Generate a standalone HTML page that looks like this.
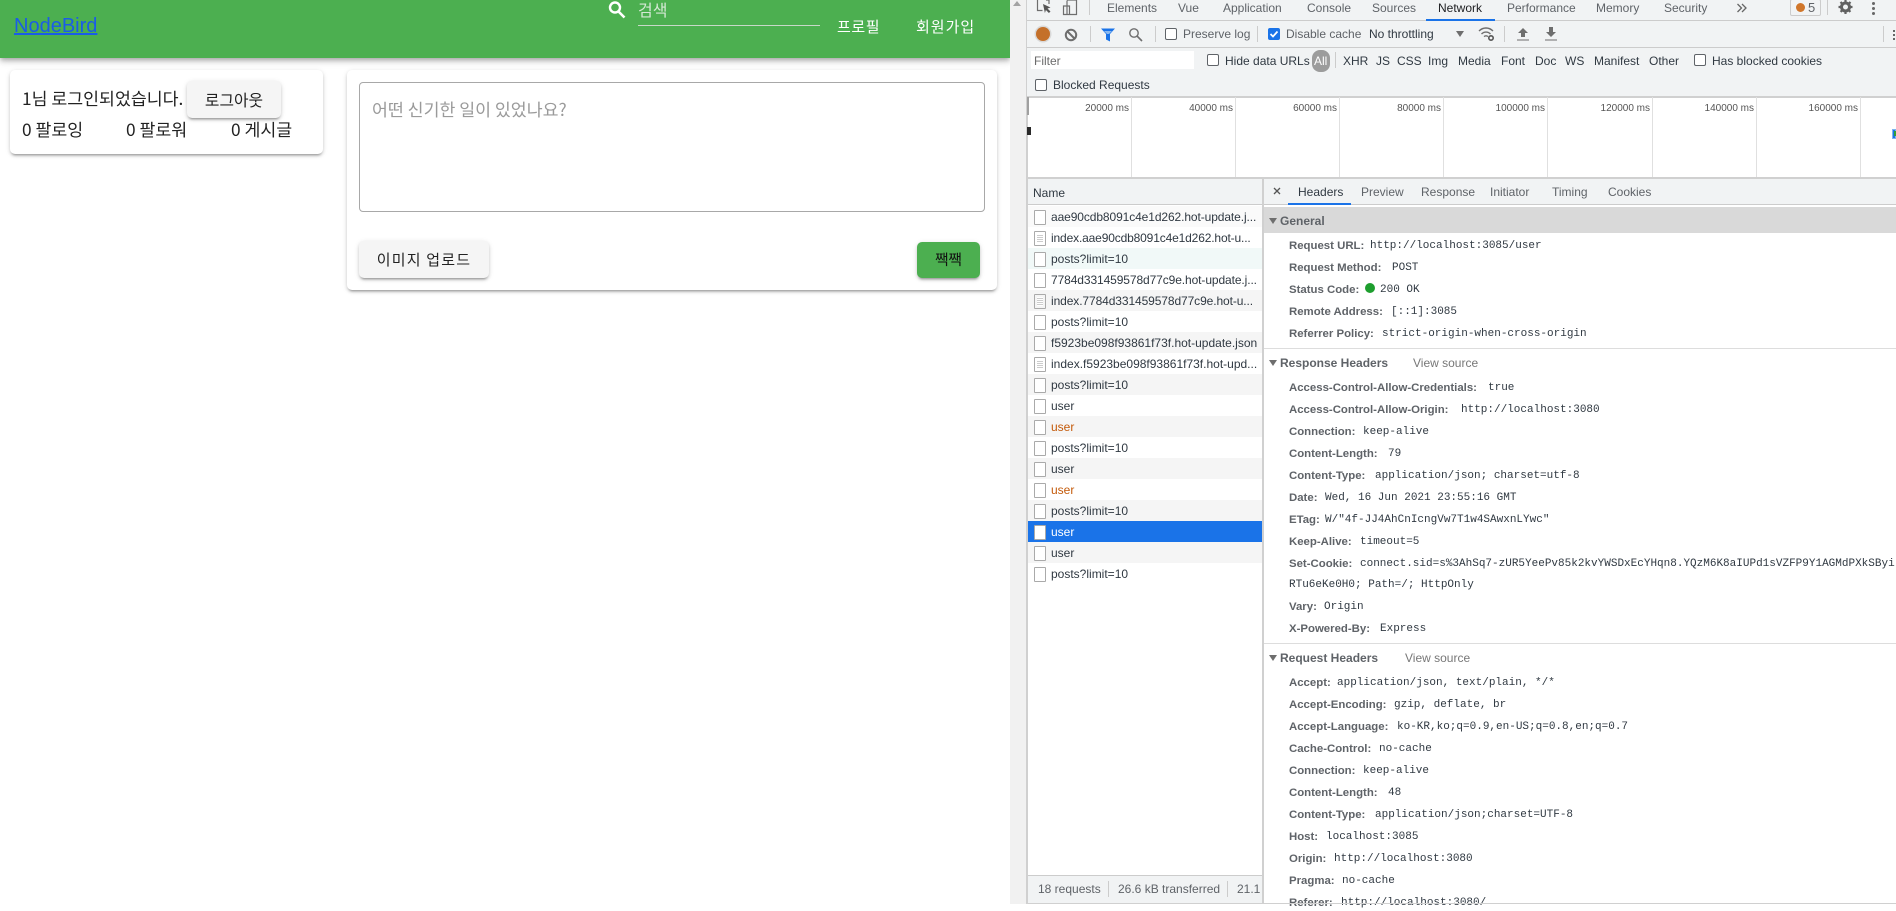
<!DOCTYPE html>
<html><head><meta charset="utf-8"><style>
html,body{margin:0;padding:0;width:1896px;height:904px;overflow:hidden;background:#fff;font-family:"Liberation Sans","Noto Sans CJK KR",sans-serif}
.a,.a *{box-sizing:border-box}
.a{position:absolute;white-space:nowrap}
.k{font-family:"Noto Sans CJK KR","Liberation Sans",sans-serif}
.card{background:#fff;border-radius:5px;box-shadow:0 3px 2px -2px rgba(0,0,0,.28),0 2px 3px rgba(0,0,0,.14),0 1px 6px rgba(0,0,0,.1)}
.btn{background:#f5f5f5;border-radius:5px;box-shadow:0 3px 2px -2px rgba(0,0,0,.3),0 2px 3px rgba(0,0,0,.14),0 1px 6px rgba(0,0,0,.1);text-align:center}
.t{font-size:12px;color:#5f6368;line-height:16px}
.d{font-size:12px;color:#303942;line-height:16px}
.cb{width:12px;height:12px;border:1px solid #5f6368;border-radius:2px;background:#fff}
.sep{width:1px;background:#ccc}
.vl{width:1px;background:#e0e0e0;top:97px;height:80px}
.ms{font-size:10px;color:#555;top:102px;line-height:14px;text-align:right;width:80px}
.row{left:1028px;width:234px;height:21px;font-size:12px;line-height:23px;color:#303942;padding-left:23px;overflow:hidden}
.row i{position:absolute;left:6px;top:4px;width:12px;height:15px;border:1px solid #aaa;background:#fff;border-radius:1px}
.row i.f{background:repeating-linear-gradient(#fff 0 1px,#ccc 1px 2px);background-clip:content-box;padding:2px 2px}
.s{background:#f5f5f5}
.or{color:#c45a0a}
.h{font-size:12px;line-height:16px;color:#5f6368;font-weight:bold;left:1280px}
.r{left:1289px;height:16px;font-size:11.4px;font-weight:bold;color:#5f6368;line-height:16px;margin-top:1px}
.v{font:11px/16px "Liberation Mono",monospace;color:#303942;margin-top:1px}
.tri{width:0;height:0;border-left:4px solid transparent;border-right:4px solid transparent;border-top:6px solid #6e6e6e;left:1269px}
.tight{letter-spacing:-.1px}
</style></head><body>

<!-- App -->
<div class="a" style="left:0;top:0;width:1010px;height:58px;background:#4caf50;box-shadow:0 2px 4px -1px rgba(0,0,0,.2),0 4px 5px rgba(0,0,0,.14),0 1px 10px rgba(0,0,0,.12)"></div>
<div class="a" style="left:14px;top:14px;font-size:20px;line-height:24px;color:#1a5ce8;text-decoration:underline">NodeBird</div>
<svg class="a" style="left:606px;top:0" width="22" height="20" viewBox="0 0 22 20"><circle cx="9" cy="7.5" r="5" fill="none" stroke="#fff" stroke-width="2.4"/><path d="M12.5 11.5l6 6" stroke="#fff" stroke-width="2.6"/></svg>
<div class="a k" style="left:638px;top:-2px;font-size:16px;line-height:22px;color:#d4e8d4">검색</div>
<div class="a" style="left:638px;top:25px;width:182px;height:1px;background:#c8d8c8"></div>
<div class="a k" style="left:837px;top:16px;font-size:15px;line-height:22px;letter-spacing:.6px;color:#fff">프로필</div>
<div class="a k" style="left:916px;top:16px;font-size:15px;line-height:22px;letter-spacing:1px;color:#fff">회원가입</div>

<div class="a card" style="left:10px;top:70px;width:313px;height:84px"></div>
<div class="a k" style="left:22px;top:86px;font-size:17.3px;line-height:24px;color:#222">1님 로그인되었습니다.</div>
<div class="a btn k" style="left:187px;top:81px;width:94px;height:37px;font-size:15.8px;line-height:37px;color:#222">로그아웃</div>
<div class="a k" style="left:22px;top:117px;font-size:17.3px;line-height:24px;color:#222">0 팔로잉</div>
<div class="a k" style="left:126px;top:117px;font-size:17.3px;line-height:24px;color:#222">0 팔로워</div>
<div class="a k" style="left:231px;top:117px;font-size:17.3px;line-height:24px;color:#222">0 게시글</div>

<div class="a card" style="left:347px;top:70px;width:650px;height:220px"></div>
<div class="a" style="left:359px;top:82px;width:626px;height:130px;border:1px solid #a8a8a8;border-radius:4px;background:#fff"></div>
<div class="a k" style="left:372px;top:97px;font-size:17.3px;line-height:24px;color:#9a9a9a">어떤 신기한 일이 있었나요?</div>
<div class="a btn k" style="left:359px;top:241px;width:130px;height:37px;font-size:15px;line-height:37px;letter-spacing:1.2px;color:#222">이미지 업로드</div>
<div class="a btn k" style="left:917px;top:242px;width:63px;height:36px;background:#4caf50;font-size:14.5px;line-height:36px;color:#111">짹짹</div>

<!-- scrollbar strip -->
<div class="a" style="left:1010px;top:0;width:16px;height:904px;background:#f1f1f1"></div>
<div class="a" style="left:1013px;top:1px;width:0;height:0;border-left:4px solid transparent;border-right:4px solid transparent;border-bottom:5px solid #a3a3a3"></div>
<div class="a" style="left:1026px;top:0;width:2px;height:904px;background:#d0d0d0"></div>

<!-- DevTools bars -->
<div class="a" style="left:1027px;top:0;width:869px;height:97px;background:#f1f3f4"></div>
<div class="a" style="left:1027px;top:20px;width:869px;height:1px;background:#ccc"></div>
<div class="a" style="left:1027px;top:47px;width:869px;height:1px;background:#ccc"></div>
<div class="a" style="left:1027px;top:96px;width:869px;height:2px;background:#d0d0d0"></div>

<svg class="a" style="left:1036px;top:0" width="20" height="16" viewBox="0 0 20 16"><path d="M1.5 0v10.5h5M10 0h3v4" fill="none" stroke="#6e6e6e" stroke-width="1.2"/><path d="M7 4l7.5 3.5-3 1 3 3-1.6 1.5-3-3-1 3z" fill="#555"/></svg>
<svg class="a" style="left:1062px;top:0" width="16" height="16" viewBox="0 0 16 16"><path d="M5 .5V14.5M5 6H1.5v8.5h6V6zM5 0h9.5v14.5H8" fill="none" stroke="#6e6e6e" stroke-width="1.2"/></svg>
<div class="a sep" style="left:1089px;top:0;height:15px"></div>

<div class="a t" style="left:1107px;top:0">Elements</div>
<div class="a t" style="left:1178px;top:0">Vue</div>
<div class="a t" style="left:1223px;top:0">Application</div>
<div class="a t" style="left:1307px;top:0">Console</div>
<div class="a t" style="left:1372px;top:0">Sources</div>
<div class="a t" style="left:1438px;top:0;color:#202124">Network</div>
<div class="a" style="left:1426px;top:19px;width:69px;height:2px;background:#1a73e8"></div>
<div class="a t" style="left:1507px;top:0">Performance</div>
<div class="a t" style="left:1596px;top:0">Memory</div>
<div class="a t" style="left:1664px;top:0">Security</div>
<svg class="a" style="left:1736px;top:2px" width="12" height="12" viewBox="0 0 12 12"><path d="M1.5 2l4 4-4 4M6 2l4 4-4 4" fill="none" stroke="#666" stroke-width="1.3"/></svg>
<div class="a" style="left:1790px;top:-1px;width:31px;height:17px;border:1px solid #ccc;border-radius:2px"></div>
<div class="a" style="left:1796px;top:3px;width:9px;height:9px;border-radius:50%;background:#d0762a"></div>
<div class="a t" style="left:1808px;top:0;font-size:13px">5</div>
<div class="a sep" style="left:1827px;top:0;height:15px"></div>
<svg class="a" style="left:1838px;top:0" width="15" height="15" viewBox="0 0 15 15"><circle cx="7.5" cy="7" r="4" fill="none" stroke="#616161" stroke-width="3"/><path d="M7.5 0v14M.5 7h14M2.5 2l10 10M12.5 2l-10 10" stroke="#616161" stroke-width="2.2" stroke-dasharray="2.4 9.2"/></svg>
<div class="a" style="left:1872px;top:2px;width:3px;height:3px;border-radius:50%;background:#666;box-shadow:0 5px 0 #666,0 10px 0 #666"></div>

<!-- toolbar -->
<div class="a" style="left:1036px;top:27px;width:14px;height:14px;border-radius:50%;background:#c4702a;box-shadow:0 0 0 1.5px #d9d9d9"></div>
<svg class="a" style="left:1064px;top:28px" width="14" height="14" viewBox="0 0 14 14"><circle cx="7" cy="7" r="5.2" fill="none" stroke="#6e6e6e" stroke-width="2"/><path d="M3.5 3.5l7 7" stroke="#6e6e6e" stroke-width="2"/></svg>
<div class="a sep" style="left:1090px;top:26px;height:16px"></div>
<svg class="a" style="left:1100px;top:28px" width="16" height="14" viewBox="0 0 16 14"><path d="M1 .5h14L10 6v7.5L6 11.5V6z" fill="#1a73e8"/><path d="M4 3h8L9 6H7z" fill="#8ab8ef"/></svg>
<svg class="a" style="left:1128px;top:27px" width="15" height="15" viewBox="0 0 15 15"><circle cx="6" cy="6" r="4.2" fill="none" stroke="#6e6e6e" stroke-width="1.4"/><path d="M9 9l5 5" stroke="#6e6e6e" stroke-width="1.6"/></svg>
<div class="a sep" style="left:1155px;top:26px;height:16px"></div>
<div class="a cb" style="left:1165px;top:28px"></div>
<div class="a t" style="left:1183px;top:26px">Preserve log</div>
<div class="a sep" style="left:1257px;top:26px;height:16px"></div>
<svg class="a" style="left:1268px;top:28px" width="12" height="12" viewBox="0 0 12 12"><rect width="12" height="12" rx="2" fill="#1a73e8"/><path d="M2.5 6l2.5 2.5 4.5-5" fill="none" stroke="#fff" stroke-width="1.7"/></svg>
<div class="a t" style="left:1286px;top:26px">Disable cache</div>
<div class="a t" style="left:1369px;top:26px;color:#303942">No throttling</div>
<div class="a" style="left:1456px;top:31px;width:0;height:0;border-left:4px solid transparent;border-right:4px solid transparent;border-top:6px solid #6e6e6e"></div>
<svg class="a" style="left:1478px;top:26px" width="18" height="16" viewBox="0 0 18 16"><path d="M1 5c4-4 10-4 14 0M3.5 8c2.6-2.6 6.4-2.6 9 0M6 10.6c1.3-1 2.7-1 4 0" fill="none" stroke="#6e6e6e" stroke-width="1.4"/><circle cx="13" cy="12" r="2.2" fill="none" stroke="#555" stroke-width="1.6"/></svg>
<div class="a sep" style="left:1504px;top:26px;height:16px"></div>
<svg class="a" style="left:1517px;top:27px" width="12" height="14" viewBox="0 0 12 14"><path d="M6 1l5 5H8v4H4V6H1zM0 12.5h12v1H0z" fill="#6e6e6e"/></svg>
<svg class="a" style="left:1545px;top:27px" width="12" height="14" viewBox="0 0 12 14"><path d="M4 0h4v5h3l-5 5-5-5h3zM0 12.5h12v1H0z" fill="#6e6e6e"/></svg>
<div class="a sep" style="left:1883px;top:26px;height:16px"></div>
<div class="a" style="left:1893px;top:30px;width:2px;height:2px;background:#666;box-shadow:0 4px 0 #666,0 8px 0 #666"></div>

<!-- filter row -->
<div class="a" style="left:1031px;top:51px;width:163px;height:18px;background:#fff"></div>
<div class="a" style="left:1034px;top:53px;font-size:12px;line-height:16px;color:#6b6b6b">Filter</div>
<div class="a cb" style="left:1207px;top:54px"></div>
<div class="a d" style="left:1225px;top:53px">Hide data URLs</div>
<div class="a" style="left:1312px;top:50px;width:18px;height:22px;border-radius:8px;background:#9c9c9c"></div>
<div class="a" style="left:1314px;top:53px;font-size:12px;line-height:16px;color:#fff">All</div>
<div class="a sep" style="left:1335px;top:52px;height:16px"></div>
<div class="a d" style="left:1343px;top:53px">XHR</div>
<div class="a d" style="left:1376px;top:53px">JS</div>
<div class="a d" style="left:1397px;top:53px">CSS</div>
<div class="a d" style="left:1428px;top:53px">Img</div>
<div class="a d" style="left:1458px;top:53px">Media</div>
<div class="a d" style="left:1501px;top:53px">Font</div>
<div class="a d" style="left:1535px;top:53px">Doc</div>
<div class="a d" style="left:1565px;top:53px">WS</div>
<div class="a d" style="left:1594px;top:53px">Manifest</div>
<div class="a d" style="left:1649px;top:53px">Other</div>
<div class="a cb" style="left:1694px;top:54px"></div>
<div class="a d" style="left:1712px;top:53px">Has blocked cookies</div>
<div class="a cb" style="left:1035px;top:79px"></div>
<div class="a d" style="left:1053px;top:77px">Blocked Requests</div>

<!-- overview -->
<div class="a" style="left:1028px;top:98px;width:868px;height:79px;background:#fff"></div>
<div class="a vl" style="left:1131px"></div><div class="a ms" style="left:1049px">20000 ms</div>
<div class="a vl" style="left:1235px"></div><div class="a ms" style="left:1153px">40000 ms</div>
<div class="a vl" style="left:1339px"></div><div class="a ms" style="left:1257px">60000 ms</div>
<div class="a vl" style="left:1443px"></div><div class="a ms" style="left:1361px">80000 ms</div>
<div class="a vl" style="left:1547px"></div><div class="a ms" style="left:1465px">100000 ms</div>
<div class="a vl" style="left:1652px"></div><div class="a ms" style="left:1570px">120000 ms</div>
<div class="a vl" style="left:1756px"></div><div class="a ms" style="left:1674px">140000 ms</div>
<div class="a vl" style="left:1860px"></div><div class="a ms" style="left:1778px">160000 ms</div>
<div class="a" style="left:1027px;top:97px;width:2px;height:18px;background:#a0a0a0"></div>
<div class="a" style="left:1027px;top:127px;width:4px;height:8px;background:#2a2a2a"></div>
<div class="a" style="left:1892px;top:129px;width:4px;height:10px;background:#1a73e8;border:1px solid #7cb4f0"></div>
<div class="a" style="left:1894px;top:131px;width:2px;height:5px;background:#2e9e3a"></div>
<div class="a" style="left:1027px;top:177px;width:869px;height:2px;background:#d0d0d0"></div>

<!-- Name column -->
<div class="a" style="left:1028px;top:179px;width:234px;height:26px;background:#f1f3f4;border-bottom:1px solid #ccc"></div>
<div class="a d" style="left:1033px;top:185px">Name</div>
<div class="a" style="left:1028px;top:205px;width:234px;height:670px;background:#fff"></div>

<div class="a row tight" style="top:206px;background:#fafafa"><i></i>aae90cdb8091c4e1d262.hot-update.j...</div>
<div class="a row" style="top:227px;letter-spacing:-.15px"><i class="f"></i>index.aae90cdb8091c4e1d262.hot-u...</div>
<div class="a row" style="top:248px;background:#f1f9f8"><i></i>posts?limit=10</div>
<div class="a row tight" style="top:269px"><i></i>7784d331459578d77c9e.hot-update.j...</div>
<div class="a row s tight" style="top:290px"><i class="f"></i>index.7784d331459578d77c9e.hot-u...</div>
<div class="a row" style="top:311px"><i></i>posts?limit=10</div>
<div class="a row s" style="top:332px"><i></i>f5923be098f93861f73f.hot-update.json</div>
<div class="a row" style="top:353px"><i class="f"></i>index.f5923be098f93861f73f.hot-upd...</div>
<div class="a row s" style="top:374px"><i></i>posts?limit=10</div>
<div class="a row" style="top:395px"><i></i>user</div>
<div class="a row s or" style="top:416px"><i></i>user</div>
<div class="a row" style="top:437px"><i></i>posts?limit=10</div>
<div class="a row s" style="top:458px"><i></i>user</div>
<div class="a row or" style="top:479px"><i></i>user</div>
<div class="a row s" style="top:500px"><i></i>posts?limit=10</div>
<div class="a row" style="top:521px;background:#1a73e8;color:#fff"><i></i>user</div>
<div class="a row s" style="top:542px"><i></i>user</div>
<div class="a row" style="top:563px"><i></i>posts?limit=10</div>

<!-- footer -->
<div class="a" style="left:1028px;top:875px;width:234px;height:28px;background:#f1f3f4;border-top:1px solid #ccc;overflow:hidden">
  <div class="a t" style="left:10px;top:5px">18 requests</div>
  <div class="a sep" style="left:80px;top:5px;height:16px"></div>
  <div class="a t" style="left:90px;top:5px">26.6 kB transferred</div>
  <div class="a sep" style="left:199px;top:5px;height:16px"></div>
  <div class="a t" style="left:209px;top:5px">21.1 MB</div>
</div>
<div class="a" style="left:1262px;top:179px;width:2px;height:725px;background:#d0d0d0"></div>
<div class="a" style="left:1027px;top:903px;width:869px;height:1px;background:#d0d0d0"></div>

<!-- right tabs -->
<div class="a" style="left:1264px;top:179px;width:632px;height:25px;background:#f1f3f4"></div>
<div class="a" style="left:1264px;top:204px;width:632px;height:1px;background:#ccc"></div>
<svg class="a" style="left:1273px;top:187px" width="8" height="8" viewBox="0 0 8 8"><path d="M1 1l6 6M7 1l-6 6" stroke="#555" stroke-width="1.3"/></svg>
<div class="a t" style="left:1298px;top:184px;color:#303942">Headers</div>
<div class="a" style="left:1288px;top:203px;width:63px;height:2px;background:#1a73e8"></div>
<div class="a t" style="left:1361px;top:184px">Preview</div>
<div class="a t" style="left:1421px;top:184px">Response</div>
<div class="a t" style="left:1490px;top:184px">Initiator</div>
<div class="a t" style="left:1552px;top:184px">Timing</div>
<div class="a t" style="left:1608px;top:184px">Cookies</div>

<!-- General -->
<div class="a" style="left:1264px;top:207px;width:632px;height:26px;background:#d9d9d9"></div>
<div class="a tri" style="top:218px"></div>
<div class="a h" style="top:213px">General</div>

<div class="a r" style="top:237px">Request URL:</div><div class="a v" style="left:1370px;top:237px">http://localhost:3085/user</div>
<div class="a r" style="top:259px">Request Method:</div><div class="a v" style="left:1392px;top:259px">POST</div>
<div class="a r" style="top:281px">Status Code:</div><div class="a" style="left:1365px;top:283px;width:10px;height:10px;border-radius:50%;background:#1e9e2e"></div><div class="a v" style="left:1380px;top:281px">200 OK</div>
<div class="a r" style="top:303px">Remote Address:</div><div class="a v" style="left:1391px;top:303px">[::1]:3085</div>
<div class="a r" style="top:325px">Referrer Policy:</div><div class="a v" style="left:1382px;top:325px">strict-origin-when-cross-origin</div>
<div class="a" style="left:1264px;top:348px;width:632px;height:1px;background:#ddd"></div>

<!-- Response -->
<div class="a tri" style="top:360px"></div>
<div class="a h" style="top:355px">Response Headers</div>
<div class="a t" style="left:1413px;top:355px;color:#777">View source</div>
<div class="a r" style="top:379px">Access-Control-Allow-Credentials:</div><div class="a v" style="left:1488px;top:379px">true</div>
<div class="a r" style="top:401px">Access-Control-Allow-Origin:</div><div class="a v" style="left:1461px;top:401px">http://localhost:3080</div>
<div class="a r" style="top:423px">Connection:</div><div class="a v" style="left:1363px;top:423px">keep-alive</div>
<div class="a r" style="top:445px">Content-Length:</div><div class="a v" style="left:1388px;top:445px">79</div>
<div class="a r" style="top:467px">Content-Type:</div><div class="a v" style="left:1375px;top:467px">application/json; charset=utf-8</div>
<div class="a r" style="top:489px">Date:</div><div class="a v" style="left:1325px;top:489px">Wed, 16 Jun 2021 23:55:16 GMT</div>
<div class="a r" style="top:511px">ETag:</div><div class="a v" style="left:1325px;top:511px">W/"4f-JJ4AhCnIcngVw7T1w4SAwxnLYwc"</div>
<div class="a r" style="top:533px">Keep-Alive:</div><div class="a v" style="left:1360px;top:533px">timeout=5</div>
<div class="a r" style="top:555px">Set-Cookie:</div><div class="a v" style="left:1360px;top:555px">connect.sid=s%3AhSq7-zUR5YeePv85k2kvYWSDxEcYHqn8.YQzM6K8aIUPd1sVZFP9Y1AGMdPXkSByi</div>
<div class="a v" style="left:1289px;top:576px">RTu6eKe0H0; Path=/; HttpOnly</div>
<div class="a r" style="top:598px">Vary:</div><div class="a v" style="left:1324px;top:598px">Origin</div>
<div class="a r" style="top:620px">X-Powered-By:</div><div class="a v" style="left:1380px;top:620px">Express</div>
<div class="a" style="left:1264px;top:643px;width:632px;height:1px;background:#ddd"></div>

<!-- Request -->
<div class="a tri" style="top:655px"></div>
<div class="a h" style="top:650px">Request Headers</div>
<div class="a t" style="left:1405px;top:650px;color:#777">View source</div>
<div class="a r" style="top:674px">Accept:</div><div class="a v" style="left:1337px;top:674px">application/json, text/plain, */*</div>
<div class="a r" style="top:696px">Accept-Encoding:</div><div class="a v" style="left:1394px;top:696px">gzip, deflate, br</div>
<div class="a r" style="top:718px">Accept-Language:</div><div class="a v" style="left:1397px;top:718px">ko-KR,ko;q=0.9,en-US;q=0.8,en;q=0.7</div>
<div class="a r" style="top:740px">Cache-Control:</div><div class="a v" style="left:1379px;top:740px">no-cache</div>
<div class="a r" style="top:762px">Connection:</div><div class="a v" style="left:1363px;top:762px">keep-alive</div>
<div class="a r" style="top:784px">Content-Length:</div><div class="a v" style="left:1388px;top:784px">48</div>
<div class="a r" style="top:806px">Content-Type:</div><div class="a v" style="left:1375px;top:806px">application/json;charset=UTF-8</div>
<div class="a r" style="top:828px">Host:</div><div class="a v" style="left:1326px;top:828px">localhost:3085</div>
<div class="a r" style="top:850px">Origin:</div><div class="a v" style="left:1334px;top:850px">http://localhost:3080</div>
<div class="a r" style="top:872px">Pragma:</div><div class="a v" style="left:1342px;top:872px">no-cache</div>
<div class="a r" style="top:894px">Referer:</div><div class="a v" style="left:1341px;top:894px">http://localhost:3080/</div>
<div class="a" style="left:1264px;top:903px;width:632px;height:1px;background:#d0d0d0"></div>
</body></html>
